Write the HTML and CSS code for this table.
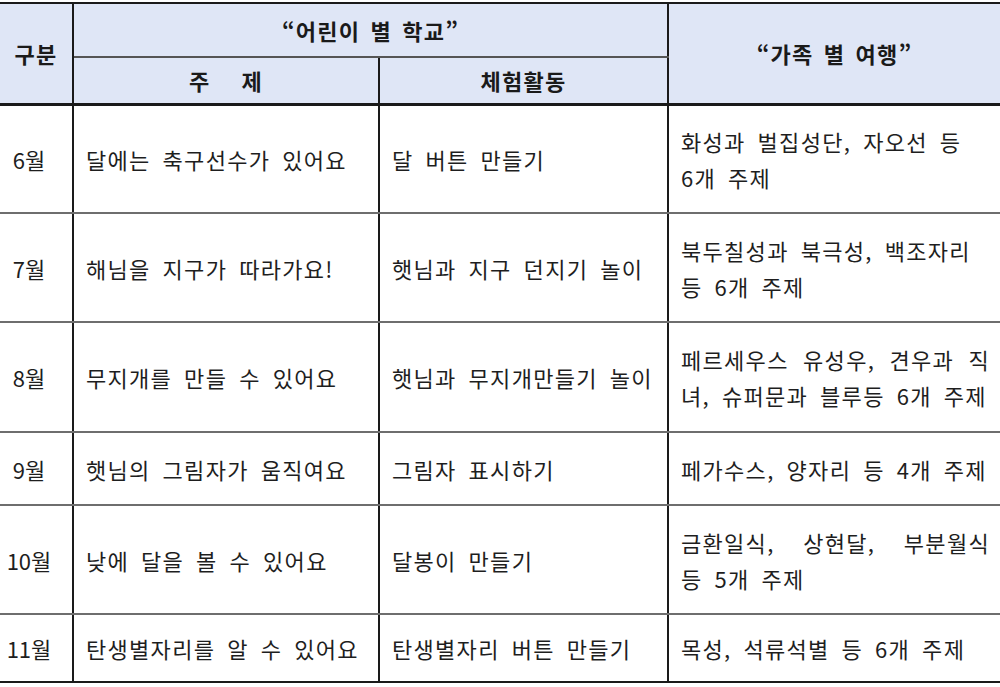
FILE: index.html
```html
<!DOCTYPE html>
<html lang="ko">
<head>
<meta charset="utf-8">
<link rel="stylesheet" href="styles.css">
</head>
<body>
<table class="plan">
  <colgroup>
    <col class="c-month">
    <col class="c-theme">
    <col class="c-act">
    <col class="c-family">
  </colgroup>
  <thead>
    <tr class="h1">
      <th rowspan="2" class="h-month">구분</th>
      <th colspan="2" class="h-school">“어린이 별 학교”</th>
      <th rowspan="2" class="h-family">“가족 별 여행”</th>
    </tr>
    <tr class="h2">
      <th class="h-theme">주&nbsp;&nbsp;&nbsp;제</th>
      <th class="h-act">체험활동</th>
    </tr>
  </thead>
  <tbody>
    <tr class="r-tall">
      <td class="month">6월</td>
      <td>달에는 축구선수가 있어요</td>
      <td>달 버튼 만들기</td>
      <td class="fam"><span class="ln">화성과 벌집성단, 자오선 등</span><span class="ln">6개 주제</span></td>
    </tr>
    <tr class="r-tall">
      <td class="month">7월</td>
      <td>해님을 지구가 따라가요!</td>
      <td>햇님과 지구 던지기 놀이</td>
      <td class="fam"><span class="ln">북두칠성과 북극성, 백조자리</span><span class="ln">등 6개 주제</span></td>
    </tr>
    <tr class="r-tall r-8">
      <td class="month">8월</td>
      <td>무지개를 만들 수 있어요</td>
      <td>햇님과 무지개만들기 놀이</td>
      <td class="fam"><span class="ln just">페르세우스 유성우, 견우과 직</span><span class="ln">녀, 슈퍼문과 블루등 6개 주제</span></td>
    </tr>
    <tr class="r-short r-9">
      <td class="month">9월</td>
      <td>햇님의 그림자가 움직여요</td>
      <td>그림자 표시하기</td>
      <td class="fam"><span class="ln">페가수스, 양자리 등 4개 주제</span></td>
    </tr>
    <tr class="r-tall r-10">
      <td class="month">10월</td>
      <td>낮에 달을 볼 수 있어요</td>
      <td>달봉이 만들기</td>
      <td class="fam"><span class="ln just">금환일식, 상현달, 부분월식</span><span class="ln">등 5개 주제</span></td>
    </tr>
    <tr class="r-short r-11">
      <td class="month">11월</td>
      <td>탄생별자리를 알 수 있어요</td>
      <td>탄생별자리 버튼 만들기</td>
      <td class="fam"><span class="ln">목성, 석류석별 등 6개 주제</span></td>
    </tr>
  </tbody>
</table>
</body>
</html>
```

FILE: styles.css
```css
html, body {
  margin: 0;
  padding: 0;
  background: #ffffff;
}

body {
  font-family: "Noto Sans CJK KR", "Noto Sans", sans-serif;
  color: #1e1e1e;
  padding-top: 2px;
}

.plan {
  width: 1000px;
  border-collapse: collapse;
  table-layout: fixed;
  border-top: 2px solid #1a1a1a;
  border-bottom: 2px solid #1a1a1a;
}

.c-month { width: 73px; }
.c-theme { width: 306px; }
.c-act { width: 289px; }
.c-family { width: 332px; }

.plan th {
  background: #dfe6f6;
  font-weight: 700;
  font-size: 22px;
  letter-spacing: 1.2px;
  word-spacing: 3px;
  color: #1a1a1a;
  padding: 0;
  text-align: center;
  vertical-align: middle;
}

.h1 { height: 54px; }
.h2 { height: 47px; }

.h-month {
  border-right: 2px solid #1a1a1a;
  border-bottom: 3px solid #1a1a1a;
}

.h-school {
  border-bottom: 2px solid #555;
  border-right: 2px solid #1a1a1a;
}

.h-family {
  border-bottom: 3px solid #1a1a1a;
}

.h-theme {
  border-right: 2px solid #1a1a1a;
  border-bottom: 3px solid #1a1a1a;
}

.h-act {
  border-right: 2px solid #1a1a1a;
  border-bottom: 3px solid #1a1a1a;
}

.plan td {
  font-size: 22px;
  letter-spacing: 1.3px;
  word-spacing: 4.5px;
  padding: 0 4px 0 12px;
  vertical-align: middle;
  border-right: 2px solid #1a1a1a;
  border-bottom: 2px solid #6e6e6e;
  white-space: nowrap;
}

.plan td:last-child {
  border-right: none;
}

.plan tr:last-child td {
  border-bottom: none;
}

.plan td.month {
  text-align: center;
  padding: 0 14px 0 0;
  letter-spacing: 0;
}

.r-tall { height: 109px; }
.r-8 { height: 110px; }
.r-short { height: 73px; }
.r-10 { height: 109px; }
.r-11 { height: 68px; }

.plan td.fam {
  padding-right: 10px;
}

.ln {
  display: block;
  line-height: 36px;
}

.ln.just {
  text-align: justify;
  text-align-last: justify;
}
```
